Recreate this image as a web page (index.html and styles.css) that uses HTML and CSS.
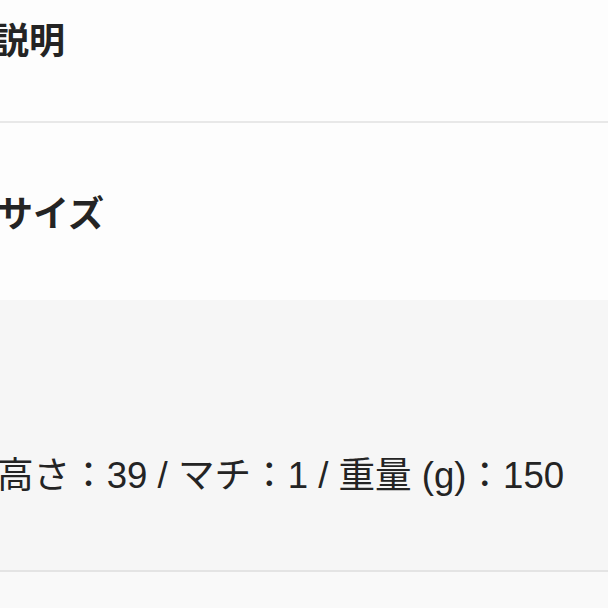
FILE: index.html
```html
<!DOCTYPE html>
<html lang="ja">
<head>
    <meta charset="UTF-8">
    <meta name="viewport" content="width=device-width, initial-scale=1.0">
    <title>商品詳細</title>
    <link rel="stylesheet" href="styles.css">
</head>
<body>
    <div class="detail">
        <section class="detail-section description">
            <h2>説明</h2>
        </section>

        <section class="detail-section size">
            <h2>サイズ</h2>
        </section>

        <div class="spec-box">
            <p>高さ：39 / マチ：1 / 重量 (g)：150</p>
        </div>

        <div class="detail-footer"></div>
    </div>
</body>
</html>
```

FILE: styles.css
```css
:root {
    --text-color: #242424;
    --background-color: #fdfdfd;
    --panel-color: #f6f6f6;
    --border-color: #e8e8e8;
}

body {
    font-family: 'Noto Sans CJK JP', 'Noto Sans', sans-serif;
    color: var(--text-color);
    background-color: var(--background-color);
    margin: 0;
    padding: 0;
}

.detail {
    margin-left: -3px;
}

.detail-section h2 {
    margin: 0;
    font-size: 36px;
    font-weight: 700;
    line-height: 1.2;
}

.description {
    height: 123px;
    padding-top: 17px;
    box-sizing: border-box;
    border-bottom: 2px solid var(--border-color);
}

.description h2 {
    margin-left: -4px;
}

.size {
    height: 177px;
    padding-top: 67px;
    box-sizing: border-box;
}

/* grey box with the size figures */
.spec-box {
    background-color: var(--panel-color);
    height: 272px;
    padding-top: 154px;
    box-sizing: border-box;
    border-bottom: 2px solid #e4e4e4;
}

.spec-box p {
    margin: 0;
    font-family: 'Liberation Sans', 'Noto Sans CJK JP', sans-serif;
    font-size: 36.6px;
    line-height: 1.2;
}

.detail-footer {
    height: 40px;
    background-color: #f9f9f9;
}
```
